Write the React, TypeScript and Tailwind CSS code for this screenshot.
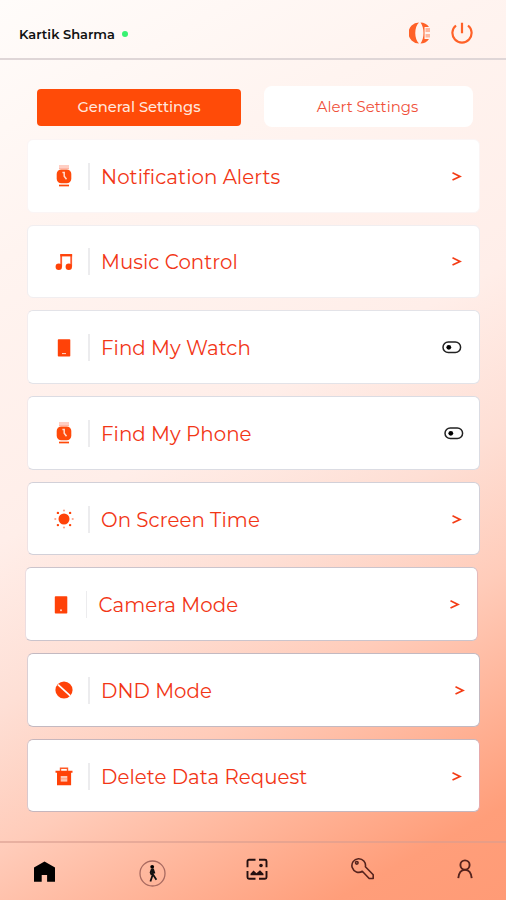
import type { ReactNode } from "react"
import clsx from "clsx"

function WatchIcon() {
  return (
    <svg width="16" height="22" viewBox="0 0 16 22">
      <path d="M3 1h10M3 3.2h10" stroke="#ffa08a" strokeWidth="1.2" />
      <rect x="0.7" y="4.5" width="14.6" height="13.8" rx="4.5" fill="#ff4a0a" />
      <path d="M6.4 7.5h1.8v3.8l2.3 3" stroke="#ffdccf" strokeWidth="1.5" fill="none" />
      <path d="M3 20.5h10" stroke="#ff4a0a" strokeWidth="1.7" />
    </svg>
  )
}

function MusicIcon() {
  return (
    <svg width="18" height="18" viewBox="0 0 18 18">
      <path d="M6.2 13.5V2h10v11.5" stroke="#ff5a30" strokeWidth="1.8" fill="none" />
      <path d="M5.3 2.3h11.8" stroke="#ff4208" strokeWidth="2.2" />
      <circle cx="3.8" cy="13.8" r="3.2" fill="#ff4208" />
      <circle cx="13.8" cy="13.8" r="3.2" fill="#ff4208" />
    </svg>
  )
}

function DeviceIcon({ dot }: { dot?: boolean }) {
  return (
    <svg width="14" height="18" viewBox="0 0 14 18">
      <rect x="0.8" y="0.3" width="12.5" height="17.2" rx="0.8" fill="#ff4208" />
      {dot ? (
        <circle cx="7" cy="14.3" r="1" fill="#ffd8ca" />
      ) : (
        <path d="M5 14.6h4" stroke="#ffd8ca" strokeWidth="1" />
      )}
    </svg>
  )
}

function SunIcon() {
  return (
    <svg width="20" height="20" viewBox="0 0 20 20" fill="#ff4208">
      <circle cx="10" cy="10" r="5.5" />
      <circle cx="3.9" cy="3.9" r="1.2" />
      <circle cx="16.1" cy="3.9" r="1.2" />
      <circle cx="3.9" cy="16.1" r="1.2" />
      <circle cx="16.1" cy="16.1" r="1.2" />
      <g fill="#ffa48c">
        <circle cx="10" cy="1.5" r="1.1" />
        <circle cx="10" cy="18.5" r="1.1" />
        <circle cx="1.3" cy="10" r="1.1" />
        <circle cx="18.7" cy="10" r="1.1" />
      </g>
    </svg>
  )
}

function BlockIcon() {
  return (
    <svg width="18" height="18" viewBox="0 0 18 18">
      <circle cx="9" cy="9" r="8.6" fill="#ff4208" />
      <path d="M3 3.6L15.3 14.8" stroke="#fff" strokeWidth="1.7" />
    </svg>
  )
}

function TrashIcon() {
  return (
    <svg width="18" height="19" viewBox="0 0 18 19">
      <path d="M5.5 4V1.3h7V4" stroke="#ff5a26" strokeWidth="1.4" fill="none" />
      <path d="M0.5 3.7h17v2h-1.4v12.6H2V5.7H.5z" fill="#ff4208" />
      <rect x="5.7" y="9" width="6.6" height="5.6" fill="#ffc5b3" />
      <path d="M6 11.8h6" stroke="#ff8c68" strokeWidth="0.8" />
    </svg>
  )
}

function ToggleIcon() {
  return (
    <svg width="20" height="13" viewBox="0 0 20 13">
      <rect x="1" y="1" width="17.6" height="10.6" rx="5.3" fill="none" stroke="#222" strokeWidth="1.5" />
      <circle cx="6.8" cy="6.3" r="2.4" />
    </svg>
  )
}

function ArrowIcon() {
  return (
    <svg width="10" height="11" viewBox="0 0 10 11">
      <path d="M0.5 1.8L8 5.4L0.5 9" fill="none" stroke="#f43d16" strokeWidth="1.7" />
    </svg>
  )
}

type Row = {
  label: string
  icon: ReactNode
  toggle?: boolean
  offset?: string
  end?: string
  border: string
}

const rows: Row[] = [
  { label: "Notification Alerts", icon: <WatchIcon />, border: "border-[#fbf5f5]" },
  { label: "Music Control", icon: <MusicIcon />, border: "border-[#f1eef0]" },
  { label: "Find My Watch", icon: <DeviceIcon />, toggle: true, border: "border-[#e3e3e8] border-l-[#f3edef]" },
  { label: "Find My Phone", icon: <WatchIcon />, toggle: true, end: "pr-[15.5px]", border: "border-[#dbdce3] border-l-[#f2e9eb]" },
  { label: "On Screen Time", icon: <SunIcon />, border: "border-[#d2d0d8] border-l-[#eee2e4]" },
  { label: "Camera Mode", icon: <DeviceIcon dot />, offset: "-ml-[2.5px] mr-[2.5px]", border: "border-[#cbc4cc] border-l-[#ebdde0] border-r-[#e5b9bb]" },
  { label: "DND Mode", icon: <BlockIcon />, end: "pr-[14px]", border: "border-[#c3b9c1] border-l-[#dacfd4]" },
  { label: "Delete Data Request", icon: <TrashIcon />, border: "border-[#c6b6bd] border-l-[#d8c8cd] border-r-[#e7a9ab]" },
]

function SettingRow({ row }: { row: Row }) {
  return (
    <button
      className={clsx(
        "flex h-[73.5px] items-center rounded-md border bg-white pt-px text-left",
        row.border,
        row.offset,
        row.end ?? "pr-[17px]",
      )}
    >
      <span className="ml-[25.5px] flex w-5 justify-center">{row.icon}</span>
      <span className="ml-[14.5px] h-[27px] w-[1.5px] bg-[#ececee]" />
      <span className="ml-[11.5px] flex-1 pt-px text-[19.8px] leading-6 tracking-[0.05px] whitespace-nowrap text-[#f23616]">
        {row.label}
      </span>
      {row.toggle ? <ToggleIcon /> : <ArrowIcon />}
    </button>
  )
}

function Header() {
  return (
    <header className="flex h-[60px] items-center border-b-2 border-[#dfd6d7] pt-[8px] pr-[33px] pl-[19px]">
      <span className="pt-[3px] text-[13px] font-semibold whitespace-nowrap text-[#111]">Kartik Sharma</span>
      <span className="mt-[2px] ml-[7px] size-[6.5px] rounded-full bg-[#38f272]" />
      <svg className="ml-auto" width="22" height="22" viewBox="0 0 22 22">
        <path d="M10 .5a10.5 10.5 0 0 0 0 21C5 17 5 5 10 .5z" fill="#ff6128" />
        <path d="M11.5 .5c3.500 0 6.500 1.500 8.500 4.500h-4.500v12H20c-2 3-5 4.500-8.500 4.500 4-5 4-16 0-21z" fill="#ff6128" />
        <path d="M16.5 6H21v4h-4.500zM16.500 12H21v3.500h-4.500z" fill="#ffb69d" />
      </svg>
      <svg className="ml-[20px]" width="22" height="22" viewBox="0 0 22 22" fill="none" stroke="#ff6128" strokeWidth="2.2">
        <path d="M5 3.5a9.6 9.6 0 1 0 12 0M11 .7v10.6" />
      </svg>
    </header>
  )
}

function BottomNav() {
  return (
    <nav className="flex h-[59px] items-start border-t-2 border-[#d99d90]/60">
      <svg className="mt-[18px] ml-[33px]" width="23" height="22" viewBox="0 0 23 22">
        <path d="M11.5.5L1 6.5v14.3h7.7V14h5.4v6.8H22V6.5z" />
      </svg>
      <svg className="mt-[17px] ml-[83px]" width="27" height="28" viewBox="0 0 27 28">
        <circle cx="13.5" cy="13.5" r="12.5" fill="none" stroke="#a96a60" strokeWidth="1.3" />
        <circle cx="13.2" cy="6.8" r="1.9" />
        <path d="M13.6 8.5V15l-2.2 6.5M14 14.5l3.4 5.2M12.8 9l-1.2 3.5 1 2.5M14 9l1.5 4.5" fill="none" stroke="#111" strokeWidth="1.8" />
      </svg>
      <svg className="mt-[15px] ml-[79.5px]" width="22" height="23" viewBox="0 0 22 23">
        <path d="M9.5 1.7H3a1.5 1.5 0 0 0-1.5 1.5v6M13 1.7h6a1.5 1.5 0 0 1 1.5 1.5v6M1.5 13v6.3a1.5 1.5 0 0 0 1.5 1.5h6.5M20.5 13v6.3a1.5 1.5 0 0 1-1.5 1.5h-6" fill="none" stroke="#241010" strokeWidth="1.9" />
        <circle cx="15" cy="7.5" r="1.8" fill="#241010" />
        <path d="M4.5 17.2v-1.5l3-3.2 3 2.7 3.5-3 3.5 3.5v1.5z" fill="#241010" />
      </svg>
      <svg className="mt-[14px] ml-[83.5px]" width="24" height="24" viewBox="0 0 24 24" fill="none" stroke="#56231d" strokeWidth="1.6" strokeLinejoin="round">
        <path d="M11.3 14.3A6.800 6.800 0 1 1 14.4 9.8l7.8 8v3.700h-4z" />
        <circle cx="5.8" cy="5.800" r="1.300" />
      </svg>
      <svg className="mt-[16px] ml-[80.5px]" width="18" height="21" viewBox="0 0 18 21" fill="none" stroke="#56231d" strokeWidth="1.9">
        <circle cx="9" cy="6" r="4.6" />
        <path d="M2.3 19.2c.5-5.4 3-8.3 6.700-8.3s6.2 2.9 6.7 8.3" />
      </svg>
    </nav>
  )
}

export default function App() {
  return (
    <div className="flex h-[900px] w-[506px] flex-col overflow-hidden bg-[linear-gradient(151deg,#fffcfa_0%,#fff4f0_22%,#ffeee9_46%,#fedfd5_60%,#ffccba_72%,#ff9e7a_92%,#ff9b76_100%)] font-['Montserrat','Inter','Liberation_Sans',sans-serif]">
      <Header />
      <main className="flex flex-1 flex-col pr-[26px] pl-[27px]">
        <div className="mt-[26px] flex items-center justify-between pr-[7px] pl-[10px]">
          <button className="mt-px h-[37px] w-[204px] rounded bg-[#ff4b08] pt-px text-[14.7px] font-medium text-[#ffe6dc]">
            General Settings
          </button>
          <button className="h-[41px] w-[209px] rounded-lg bg-white pt-[2px] pr-[2px] text-[14.9px] text-[#f0503a]">
            Alert Settings
          </button>
        </div>
        <div className="mt-[12px] flex flex-col gap-[12.2px]">
          {rows.map((row) => (
            <SettingRow key={row.label} row={row} />
          ))}
        </div>
      </main>
      <BottomNav />
    </div>
  )
}
